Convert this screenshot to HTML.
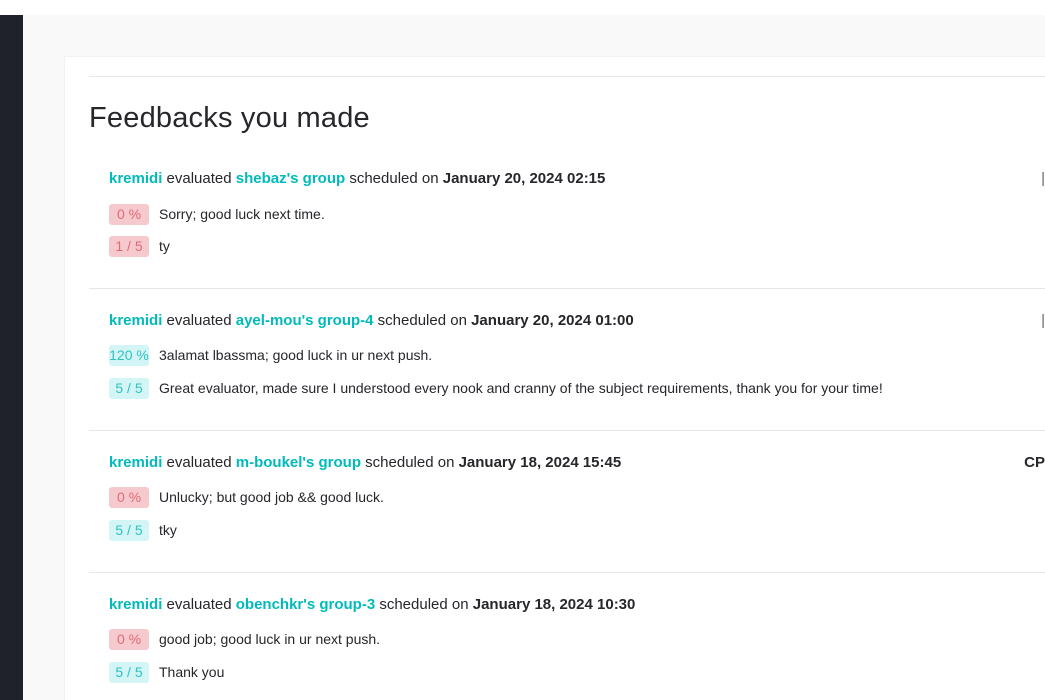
<!DOCTYPE html>
<html><head><meta charset="utf-8"><style>
*{margin:0;padding:0;box-sizing:border-box}
body{width:1045px;height:700px;overflow:hidden;background:#fff;font-family:"Liberation Sans",sans-serif;position:relative;color:#26262b}
.side{position:absolute;left:0;top:15px;width:23px;height:685px;background:#1f222a}
.bg{position:absolute;left:23px;top:15px;right:0;bottom:0;background:#f9f9f9}
.card{position:absolute;left:64px;top:56px;right:0;bottom:0;background:#fff;border-top:1px solid #f2f2f2;border-left:1px solid #f2f2f2}
.hr{position:absolute;left:89px;right:0;height:1px;background:#e6e6e6}
h1{position:absolute;left:89px;top:102px;font-weight:normal;font-size:29px;color:#26262b;letter-spacing:0.2px}
.e{position:absolute;left:109px;right:0;font-size:14px}
.h{position:absolute;top:1px;white-space:nowrap;font-size:15px}
.t{color:#00babc;font-weight:bold}
.b{font-weight:bold}
.r{position:absolute;left:0;white-space:nowrap;height:21px;line-height:21px}
.bd{display:inline-block;width:40px;text-align:center;border-radius:3px;font-size:14px;margin-right:10px}
.red{background:#f5c9cd;color:#e06b78}
.grn{background:#d3f5f5;color:#2ec3c5}
.rt{position:absolute;right:0;top:1px;font-weight:bold;font-size:15px}
</style></head><body>
<div class="side"></div><div class="bg"></div><div class="card"></div>
<div class="hr" style="top:76px"></div>
<h1>Feedbacks you made</h1>
<div class="hr" style="top:288px"></div>
<div class="hr" style="top:430px"></div>
<div class="hr" style="top:572px"></div>

<div class="e" style="top:169px">
<div class="h"><span class="t">kremidi</span> evaluated <span class="t">shebaz's group</span> scheduled on <span class="b">January 20, 2024 02:15</span></div>
<div class="rt" style="color:#666;font-weight:normal">|</div>
<div class="r" style="top:35px"><span class="bd red">0 %</span>Sorry; good luck next time.</div>
<div class="r" style="top:67px"><span class="bd red">1 / 5</span>ty</div>
</div>

<div class="e" style="top:311px">
<div class="h"><span class="t">kremidi</span> evaluated <span class="t">ayel-mou's group-4</span> scheduled on <span class="b">January 20, 2024 01:00</span></div>
<div class="rt" style="color:#666;font-weight:normal">|</div>
<div class="r" style="top:34px"><span class="bd grn">120 %</span>3alamat lbassma; good luck in ur next push.</div>
<div class="r" style="top:67px"><span class="bd grn">5 / 5</span>Great evaluator, made sure I understood every nook and cranny of the subject requirements, thank you for your time!</div>
</div>

<div class="e" style="top:453px">
<div class="h"><span class="t">kremidi</span> evaluated <span class="t">m-boukel's group</span> scheduled on <span class="b">January 18, 2024 15:45</span></div>
<div class="rt">CP</div>
<div class="r" style="top:34px"><span class="bd red">0 %</span>Unlucky; but good job &amp;&amp; good luck.</div>
<div class="r" style="top:67px"><span class="bd grn">5 / 5</span>tky</div>
</div>

<div class="e" style="top:595px">
<div class="h"><span class="t">kremidi</span> evaluated <span class="t">obenchkr's group-3</span> scheduled on <span class="b">January 18, 2024 10:30</span></div>
<div class="r" style="top:34px"><span class="bd red">0 %</span>good job; good luck in ur next push.</div>
<div class="r" style="top:67px"><span class="bd grn">5 / 5</span>Thank you</div>
</div>
</body></html>
